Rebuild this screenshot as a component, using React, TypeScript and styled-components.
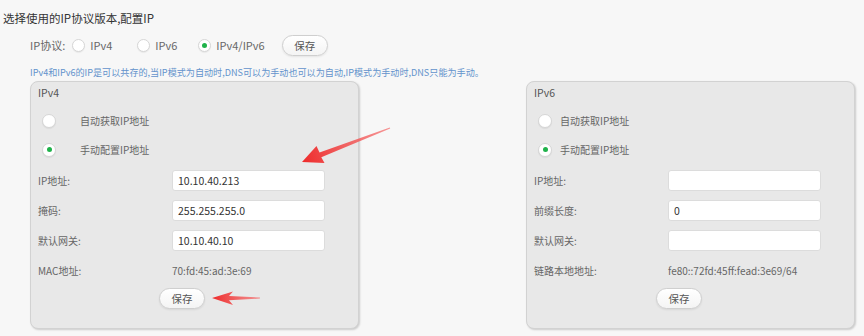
import React from "react";
import styled, { createGlobalStyle } from "styled-components";

const GlobalStyle = createGlobalStyle`
    html, body {
        margin: 0;
        padding: 0;
        background: #f7f7f7;
    }
    body {
        font-family: "Noto Sans CJK SC", "Noto Sans", sans-serif;
        color: #555;
    }
`;

const Page = styled.div`
    position: relative;
    width: 864px;
    height: 336px;
    padding: 8px 0 0 3px;
    box-sizing: border-box;
    overflow: hidden;
`;

const Title = styled.div`
    font-size: 11.5px;
    line-height: 20px;
    color: #333;
`;

const ProtocolRow = styled.div`
    display: flex;
    align-items: center;
    height: 22px;
    margin: 6px 0 0 27px;
    font-size: 11px;
    color: #666;
`;

const ProtoLabel = styled.span`
    margin-right: 7px;
`;

const Option = styled.label<{ $gap?: number; $space?: number }>`
    display: flex;
    align-items: center;
    gap: ${({ $gap }) => $gap ?? 5}px;
    margin-right: ${({ $space }) => $space ?? 0}px;
`;

const Radio = styled.span<{ $checked?: boolean; $size?: number }>`
    position: relative;
    width: ${({ $size }) => $size ?? 13}px;
    height: ${({ $size }) => $size ?? 13}px;
    border-radius: 50%;
    background: #fff;
    border: 1px solid #d6d6d6;
    box-sizing: border-box;
    box-shadow: 0 1px 1px rgba(0, 0, 0, 0.06);
    flex-shrink: 0;

    &::after {
        content: "";
        display: ${({ $checked }) => ($checked ? "block" : "none")};
        position: absolute;
        left: 50%;
        top: 50%;
        width: 5px;
        height: 5px;
        margin: -2.5px 0 0 -2.5px;
        border-radius: 50%;
        background: #1fb24a;
    }
`;

const PillButton = styled.button<{ $ml?: number }>`
    width: 46px;
    height: 21px;
    margin-left: ${({ $ml }) => $ml ?? 0}px;
    border-radius: 11px;
    border: 1px solid #cfcfcf;
    background: linear-gradient(#ffffff, #f4f4f4);
    box-shadow: 0 1px 2px rgba(0, 0, 0, 0.08);
    font-family: inherit;
    font-size: 10.5px;
    color: #555;
    padding: 0;
    cursor: pointer;
`;

const Hint = styled.div`
    margin: 8px 0 0 27px;
    font-size: 9.1px;
    line-height: 16px;
    color: #6393cc;
    white-space: nowrap;
`;

const Panels = styled.div`
    display: flex;
    gap: 167px;
    margin: 1px 0 0 27px;
`;

const Panel = styled.div`
    width: 329px;
    height: 248px;
    box-sizing: border-box;
    padding: 2px 0 0 0;
    background: #e8e8e8;
    border: 1px solid #d2d2d2;
    border-radius: 8px;
    box-shadow: 1px 1px 2px rgba(0, 0, 0, 0.18);
    font-size: 10px;
    color: #666;
`;

const PanelHeader = styled.div`
    line-height: 18px;
    padding-left: 7px;
    font-size: 10.5px;
    color: #555;
`;

const ModeList = styled.div`
    margin: 4px 0 1px;
`;

const ModeRow = styled.div`
    display: flex;
    align-items: center;
    height: 29px;
    padding-left: 11px;
`;

const FieldRow = styled.div`
    display: grid;
    grid-template-columns: 134px 153px;
    align-items: center;
    height: 30px;
    padding-left: 7px;
`;

const Input = styled.input`
    width: 153px;
    height: 21px;
    box-sizing: border-box;
    border: 1px solid #dcdcdc;
    border-radius: 3px;
    background: #fff;
    padding: 0 5px;
    font-family: inherit;
    font-size: 10.5px;
    color: #333;
    outline: none;
`;

const Value = styled.span`
    color: #666;
`;

const ButtonRow = styled.div<{ $offset: number }>`
    display: flex;
    margin-top: 3px;
    padding-left: ${({ $offset }) => $offset}px;
`;

const Overlay = styled.svg`
    position: absolute;
    left: 0;
    top: 0;
    pointer-events: none;
`;

type Field = { label: string; value?: string; input?: boolean };

type PanelProps = {
    name: string;
    labelGap: number;
    fields: Field[];
    buttonOffset: number;
};

const IpPanel = ({ name, labelGap, fields, buttonOffset }: PanelProps) => (
    <Panel>
        <PanelHeader>{name}</PanelHeader>
        <ModeList>
            <ModeRow>
                <Option $gap={labelGap}>
                    <Radio $size={14} />
                    自动获取IP地址
                </Option>
            </ModeRow>
            <ModeRow>
                <Option $gap={labelGap}>
                    <Radio $size={14} $checked />
                    手动配置IP地址
                </Option>
            </ModeRow>
        </ModeList>
        {fields.map((f) => (
            <FieldRow key={f.label}>
                <span>{f.label}:</span>
                {f.input ? (
                    <Input defaultValue={f.value ?? ""} />
                ) : (
                    <Value>{f.value}</Value>
                )}
            </FieldRow>
        ))}
        <ButtonRow $offset={buttonOffset}>
            <PillButton>保存</PillButton>
        </ButtonRow>
    </Panel>
);

const ipv4Fields: Field[] = [
    { label: "IP地址", value: "10.10.40.213", input: true },
    { label: "掩码", value: "255.255.255.0", input: true },
    { label: "默认网关", value: "10.10.40.10", input: true },
    { label: "MAC地址", value: "70:fd:45:ad:3e:69" },
];

const ipv6Fields: Field[] = [
    { label: "IP地址", input: true },
    { label: "前缀长度", value: "0", input: true },
    { label: "默认网关", input: true },
    { label: "链路本地地址", value: "fe80::72fd:45ff:fead:3e69/64" },
];

export default function App() {
    return (
        <>
            <GlobalStyle />
            <Page>
                <Title>选择使用的IP协议版本,配置IP</Title>
                <ProtocolRow>
                    <ProtoLabel>IP协议:</ProtoLabel>
                    <Option $space={25}>
                        <Radio />
                        IPv4
                    </Option>
                    <Option $space={21}>
                        <Radio />
                        IPv6
                    </Option>
                    <Option>
                        <Radio $checked />
                        IPv4/IPv6
                    </Option>
                    <PillButton $ml={17}>保存</PillButton>
                </ProtocolRow>
                <Hint>
                    IPv4和IPv6的IP是可以共存的,当IP模式为自动时,DNS可以为手动也可以为自动,IP模式为手动时,DNS只能为手动。
                </Hint>
                <Panels>
                    <IpPanel
                        name="IPv4"
                        labelGap={24}
                        fields={ipv4Fields}
                        buttonOffset={128}
                    />
                    <IpPanel
                        name="IPv6"
                        labelGap={8}
                        fields={ipv6Fields}
                        buttonOffset={129}
                    />
                </Panels>
                <Overlay width="864" height="336" viewBox="0 0 864 336">
                    <defs>
                        <linearGradient id="arrowA" x1="390" y1="128" x2="302" y2="162" gradientUnits="userSpaceOnUse">
                            <stop offset="0" stopColor="#f56a6a" stopOpacity="0.7" />
                            <stop offset="1" stopColor="#ee2b2b" />
                        </linearGradient>
                        <linearGradient id="arrowB" x1="260" y1="298" x2="212" y2="298" gradientUnits="userSpaceOnUse">
                            <stop offset="0" stopColor="#f56a6a" stopOpacity="0.7" />
                            <stop offset="1" stopColor="#ee2b2b" />
                        </linearGradient>
                    </defs>
                    <polygon
                        fill="url(#arrowA)"
                        points="302,162 324.5,163 321.3,157.3 390.2,128.6 389.8,127.4 319.5,152.6 316.5,146 302,162"
                    />
                    <polygon
                        fill="url(#arrowB)"
                        points="212,298 233,291.5 229,296 260,297.4 260,298.6 229,300.2 233,305 212,298"
                    />
                </Overlay>
            </Page>
        </>
    );
}
